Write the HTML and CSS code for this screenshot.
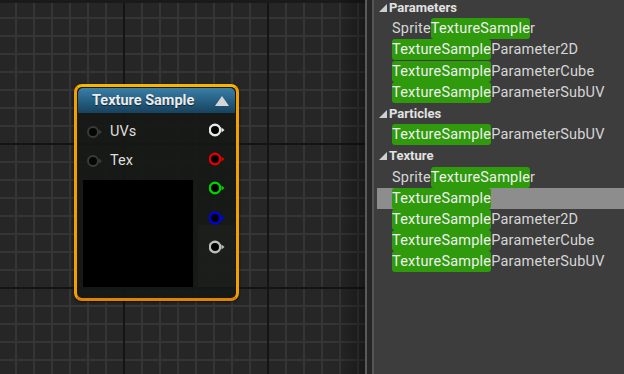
FILE: index.html
```html
<!DOCTYPE html>
<html lang="en">
<head>
    <meta charset="UTF-8">
    <title>Texture Sample</title>
    <link rel="stylesheet" href="styles.css">
</head>
<body>
    <div class="editor">
        <div class="canvas">
            <div class="canvas-shade"></div>
            <div class="node">
                <div class="node-head">
                    <span class="node-title">Texture Sample</span>
                    <svg class="collapse" width="14" height="10" viewBox="0 0 14 10"><polygon points="7,0 14,10 0,10" fill="#d6d6d6"/></svg>
                </div>
                <div class="node-body">
                    <div class="inputs">
                        <div class="pin-row">
                            <svg class="pin" width="16" height="14" viewBox="0 0 16 14"><circle cx="6" cy="7" r="5" fill="#050505" stroke="#3a3a3a" stroke-width="2"/><polygon points="12,4.5 15,7 12,9.5" fill="#3a3a3a"/></svg>
                            <span class="pin-label">UVs</span>
                        </div>
                        <div class="pin-row">
                            <svg class="pin" width="16" height="14" viewBox="0 0 16 14"><circle cx="6" cy="7" r="5" fill="#050505" stroke="#3a3a3a" stroke-width="2"/><polygon points="12,4.5 15,7 12,9.5" fill="#3a3a3a"/></svg>
                            <span class="pin-label">Tex</span>
                        </div>
                        <div class="preview"></div>
                    </div>
                    <div class="outputs">
                        <div class="out-row"><svg width="16" height="14" viewBox="0 0 16 14"><circle cx="6" cy="7" r="5.2" fill="#000" stroke="#e8e8e8" stroke-width="2.4"/><polygon points="12.5,4.5 15.5,7 12.5,9.5" fill="#e8e8e8"/></svg></div>
                        <div class="out-row"><svg width="16" height="14" viewBox="0 0 16 14"><circle cx="6" cy="7" r="5.2" fill="#000" stroke="#e00000" stroke-width="2.4"/><polygon points="12.5,4.5 15.5,7 12.5,9.5" fill="#e00000"/></svg></div>
                        <div class="out-row"><svg width="16" height="14" viewBox="0 0 16 14"><circle cx="6" cy="7" r="5.2" fill="#000" stroke="#00d000" stroke-width="2.4"/><polygon points="12.5,4.5 15.5,7 12.5,9.5" fill="#00d000"/></svg></div>
                        <div class="out-row"><svg width="16" height="14" viewBox="0 0 16 14"><circle cx="6" cy="7" r="5.2" fill="#000" stroke="#0000e0" stroke-width="2.4"/><polygon points="12.5,4.5 15.5,7 12.5,9.5" fill="#0000e0"/></svg></div>
                        <div class="out-row"><svg width="16" height="14" viewBox="0 0 16 14"><circle cx="6" cy="7" r="5.2" fill="#000" stroke="#bdbdbd" stroke-width="2.4"/><polygon points="12.5,4.5 15.5,7 12.5,9.5" fill="#bdbdbd"/></svg></div>
                    </div>
                </div>
            </div>
        </div>
        <div class="splitter"></div>
        <div class="palette">
            <ul class="tree">
                <li class="category"><svg class="arrow" width="8" height="8" viewBox="0 0 8 8"><polygon points="8,0 8,8 0,8" fill="#cfcfcf"/></svg>Parameters</li>
                <li class="item">Sprite<span class="match">TextureSample</span>r</li>
                <li class="item"><span class="match">TextureSample</span>Parameter2D</li>
                <li class="item"><span class="match">TextureSample</span>ParameterCube</li>
                <li class="item"><span class="match">TextureSample</span>ParameterSubUV</li>
                <li class="category"><svg class="arrow" width="8" height="8" viewBox="0 0 8 8"><polygon points="8,0 8,8 0,8" fill="#cfcfcf"/></svg>Particles</li>
                <li class="item"><span class="match">TextureSample</span>ParameterSubUV</li>
                <li class="category"><svg class="arrow" width="8" height="8" viewBox="0 0 8 8"><polygon points="8,0 8,8 0,8" fill="#cfcfcf"/></svg>Texture</li>
                <li class="item">Sprite<span class="match">TextureSample</span>r</li>
                <li class="item selected"><span class="match">TextureSample</span></li>
                <li class="item"><span class="match">TextureSample</span>Parameter2D</li>
                <li class="item"><span class="match">TextureSample</span>ParameterCube</li>
                <li class="item"><span class="match">TextureSample</span>ParameterSubUV</li>
            </ul>
        </div>
    </div>
</body>
</html>
```

FILE: styles.css
```css
body {
    margin: 0;
    padding: 0;
    font-family: Roboto, "Liberation Sans", sans-serif;
    background-color: #262626;
    overflow: hidden;
}

.editor {
    display: flex;
    width: 624px;
    height: 374px;
}

/* graph canvas with 18px grid, major lines every 8 cells */
.canvas {
    position: relative;
    width: 365px;
    height: 374px;
    overflow: hidden;
    background-color: #262626;
    background-image:
        linear-gradient(to bottom, #1a1a1a 3px, transparent 3px),
        linear-gradient(to right, #141414 2px, transparent 2px),
        linear-gradient(to bottom, #141414 2px, transparent 2px),
        linear-gradient(to right, #353535 2px, transparent 2px),
        linear-gradient(to bottom, #353535 2px, transparent 2px);
    background-size:
        100% 100%,
        144px 100%,
        100% 144px,
        18px 100%,
        100% 18px;
    background-position:
        0 0,
        123px 0,
        0 143px,
        15px 0,
        0 -1px;
}

.canvas-shade {
    position: absolute;
    top: 0;
    right: 0;
    width: 30px;
    height: 100%;
    background: linear-gradient(to right, rgba(0, 0, 0, 0), rgba(0, 0, 0, 0.35));
}

.node {
    position: absolute;
    left: 74px;
    top: 84px;
    width: 157px;
    border: 3px solid #f0a000;
    border-top-color: #f7b600;
    border-bottom-color: #e08400;
    border-radius: 8px;
    padding: 1px;
    background-color: rgba(22, 24, 22, 0.92);
    box-shadow: 0 1px 3px rgba(0, 0, 0, 0.6);
}

.node-head {
    height: 25px;
    display: flex;
    align-items: center;
    justify-content: space-between;
    padding: 0 6px 0 14px;
    border-radius: 5px 5px 0 0;
    background: linear-gradient(to bottom, #3b7fa7, #245d80 55%, #18425e);
}

.node-title {
    color: #ececec;
    font-weight: bold;
    font-size: 14.5px;
    text-shadow: 0 1px 1px rgba(0, 0, 0, 0.6);
}

.collapse {
    display: block;
}

.node-body {
    display: flex;
    padding-bottom: 10px;
}

.inputs {
    width: 115px;
    padding-top: 4px;
    padding-left: 5px;
}

.pin-row {
    height: 29px;
    display: flex;
    align-items: center;
    padding-left: 4px;
}

.pin {
    display: block;
    margin-right: 7px;
}

.pin-label {
    color: #dedede;
    font-size: 14.5px;
}

.preview {
    margin-top: 5px;
    width: 110px;
    height: 107px;
    background-color: #000000;
}

.outputs {
    flex: 1;
    padding-top: 2px;
    background: linear-gradient(to bottom, transparent 112px, rgba(60, 60, 60, 0.12) 112px);
}

.out-row {
    height: 29.3px;
    display: flex;
    align-items: center;
    padding-left: 11px;
}

.out-row svg {
    display: block;
}

.splitter {
    width: 5px;
    height: 374px;
    border-left: 2px solid #5a5a5a;
    border-right: 2px solid #555555;
    background-color: #262626;
}

.palette {
    flex: 1;
    background-color: #3d3d3d;
    overflow: hidden;
}

ul.tree {
    list-style: none;
    margin: -3px 0 0 0;
    padding: 0;
}

.tree li {
    height: 21.2px;
    display: flex;
    align-items: center;
    white-space: nowrap;
}

.category {
    padding-left: 5px;
    color: #e2e2e2;
    font-weight: bold;
    font-size: 13px;
}

.arrow {
    display: block;
    margin-right: 2px;
}

.item {
    padding-left: 18px;
    color: #d6d6d6;
    font-size: 14.5px;
    letter-spacing: 0.2px;
}

.item.selected {
    margin-left: 3px;
    padding-left: 15px;
    background-color: #8d8d8d;
}

.match {
    background-color: #2e9a0c;
    color: #f0f0f0;
    border-radius: 3px;
    padding: 2px 0;
}
```
